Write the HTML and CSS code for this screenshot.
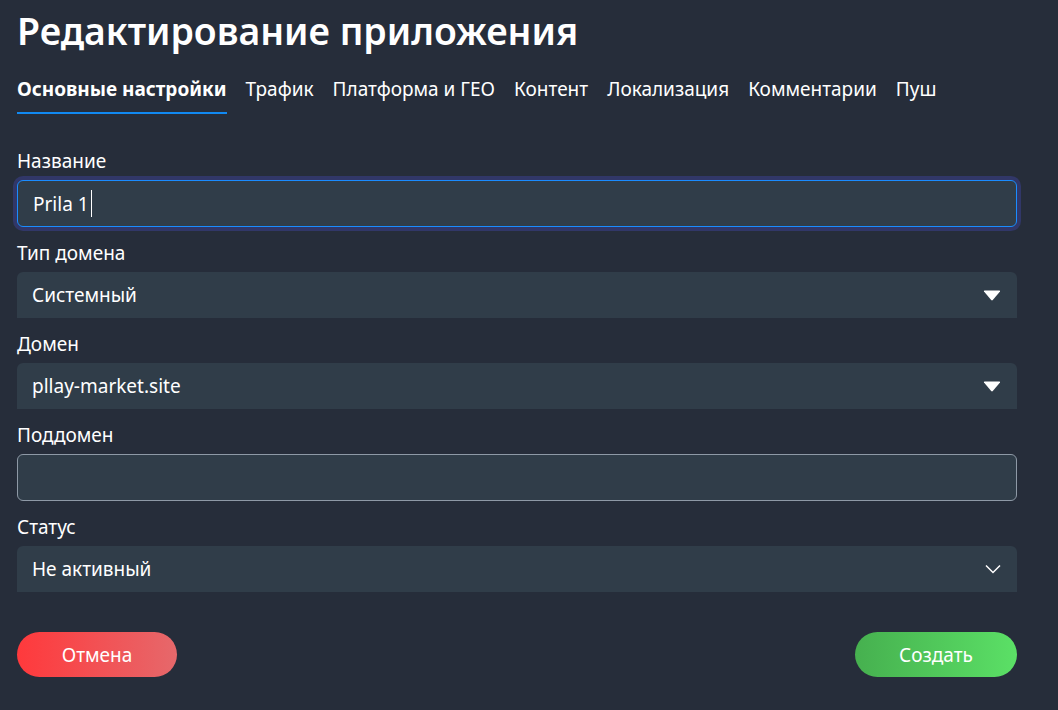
FILE: index.html
```html
<!DOCTYPE html>
<html lang="ru">

<head>
    <meta charset="UTF-8">
    <meta name="viewport" content="width=device-width, initial-scale=1.0">
    <title>Редактирование приложения</title>
    <link rel="stylesheet" href="styles.css">
</head>

<body>
    <div class="page">
        <h1 class="title">Редактирование приложения</h1>

        <div class="tabs">
            <div class="tab active">Основные настройки</div>
            <div class="tab">Трафик</div>
            <div class="tab">Платформа и ГЕО</div>
            <div class="tab">Контент</div>
            <div class="tab">Локализация</div>
            <div class="tab">Комментарии</div>
            <div class="tab">Пуш</div>
        </div>

        <div class="form">
            <div class="field">
                <div class="label">Название</div>
                <div class="input focus">Prila 1<span class="caret"></span></div>
            </div>
            <div class="field">
                <div class="label">Тип домена</div>
                <div class="select">
                    <span>Системный</span>
                    <svg class="tri" width="18" height="11" viewBox="0 0 18 11"><path d="M1 1.5 Q0.5 0.5 1.8 0.5 H16.2 Q17.5 0.5 17 1.5 L9.8 10 Q9 10.8 8.2 10 Z" fill="#fff"/></svg>
                </div>
            </div>
            <div class="field">
                <div class="label">Домен</div>
                <div class="select">
                    <span>pllay-market.site</span>
                    <svg class="tri" width="18" height="11" viewBox="0 0 18 11"><path d="M1 1.5 Q0.5 0.5 1.8 0.5 H16.2 Q17.5 0.5 17 1.5 L9.8 10 Q9 10.8 8.2 10 Z" fill="#fff"/></svg>
                </div>
            </div>
            <div class="field">
                <div class="label">Поддомен</div>
                <div class="input"></div>
            </div>
            <div class="field">
                <div class="label">Статус</div>
                <div class="select">
                    <span>Не активный</span>
                    <svg class="chev" width="16" height="10" viewBox="0 0 16 10"><path d="M1 1.5 L8 8.5 L15 1.5" fill="none" stroke="#fff" stroke-width="1.5"/></svg>
                </div>
            </div>
        </div>

        <div class="actions">
            <div class="btn cancel">Отмена</div>
            <div class="btn create">Создать</div>
        </div>
    </div>
</body>

</html>
```

FILE: styles.css
```css
body {
    margin: 0;
    background: #262d3a;
    color: #fff;
    font-family: "Noto Sans", "Open Sans", sans-serif;
}

.page {
    width: 1000px;
    margin-left: 17px;
    padding-top: 9px;
}

.title {
    margin: 0;
    font-size: 37.4px;
    font-weight: 600;
    line-height: 44px;
}

.tabs {
    display: flex;
    gap: 19px;
    margin-top: 24px;
}

.tab {
    font-size: 19px;
    line-height: 24px;
    padding-bottom: 11px;
    border-bottom: 2px solid transparent;
}

.tab.active {
    font-weight: 700;
    border-bottom-color: #1189f2;
}

.form {
    margin-top: 35px;
    display: flex;
    flex-direction: column;
    gap: 14px;
}

.label {
    font-size: 19px;
    line-height: 24px;
    margin-bottom: 7px;
}

.input {
    height: 47px;
    box-sizing: border-box;
    border: 1px solid #8e99a6;
    border-radius: 6px;
    background: #303d49;
    padding: 0 15px;
    font-size: 19px;
    display: flex;
    align-items: center;
}

.input.focus {
    border-color: #1a8cff;
    box-shadow: 0 0 0 4px #313768;
}

.caret {
    display: inline-block;
    width: 1px;
    height: 27px;
    background: #fff;
    margin-left: 2px;
}

.select {
    height: 46px;
    border-radius: 6px 6px 0 0;
    background: #303d49;
    padding: 0 16px 0 15px;
    font-size: 19px;
    display: flex;
    align-items: center;
    justify-content: space-between;
}

.tri {
    margin-top: 1px;
}

.actions {
    margin-top: 40px;
    display: flex;
    justify-content: space-between;
}

.btn {
    height: 45px;
    border-radius: 23px;
    font-size: 19px;
    display: flex;
    align-items: center;
    justify-content: center;
}

.cancel {
    width: 160px;
    background: linear-gradient(90deg, #ff393c, #e6686b);
}

.create {
    width: 162px;
    background: linear-gradient(90deg, #46b04f, #5be066);
}
```
